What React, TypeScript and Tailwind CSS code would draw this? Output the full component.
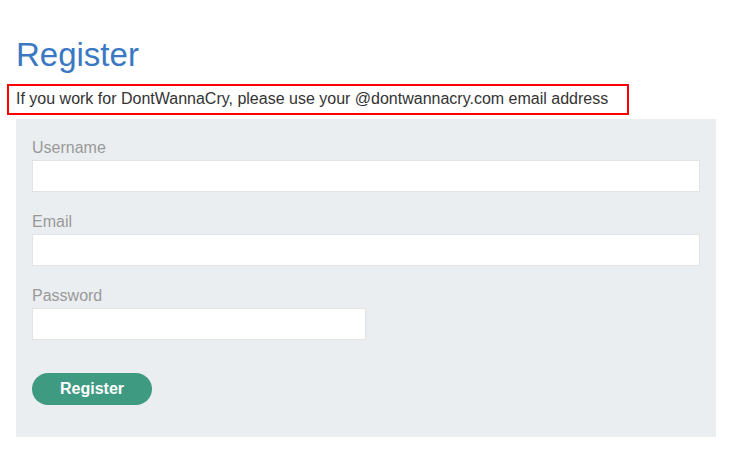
import React from "react";

export default function App() {
  return (
    <div className="min-h-[463px] bg-white" style={{ fontFamily: '"Liberation Sans", Arial, sans-serif' }}>
      <div className="pt-[36px] pl-[16px]">
        <h1 className="text-[33px] leading-[37px] text-[#3a78c4] font-normal">Register</h1>
      </div>
      <div className="mt-[11px] ml-[7px] w-[622px] h-[31px] border-2 border-[#ff0000] pl-[7px] pb-[2px] flex items-center text-[16px] text-[#333333]">
        If you work for DontWannaCry, please use your @dontwannacry.com email address
      </div>
      <div className="mt-[4px] ml-[16px] w-[700px] bg-[#ebeef1] pt-[19px] pb-[32px] px-[16px]">
        <label className="block text-[16px] leading-5 text-[#999999] mb-[2px]">Username</label>
        <input className="block w-[668px] h-8 bg-white border border-[#e3e3e3] outline-none" />
        <label className="block mt-[20px] text-[16px] leading-5 text-[#999999] mb-[2px]">Email</label>
        <input className="block w-[668px] h-8 bg-white border border-[#e3e3e3] outline-none" />
        <label className="block mt-[20px] text-[16px] leading-5 text-[#999999] mb-[2px]">Password</label>
        <input type="password" className="block w-[334px] h-8 bg-white border border-[#e3e3e3] outline-none" />
        <button className="mt-[33px] w-[120px] h-8 rounded-full bg-[#3f9a82] text-white font-bold text-[16px] flex items-center justify-center">
          Register
        </button>
      </div>
    </div>
  );
}
